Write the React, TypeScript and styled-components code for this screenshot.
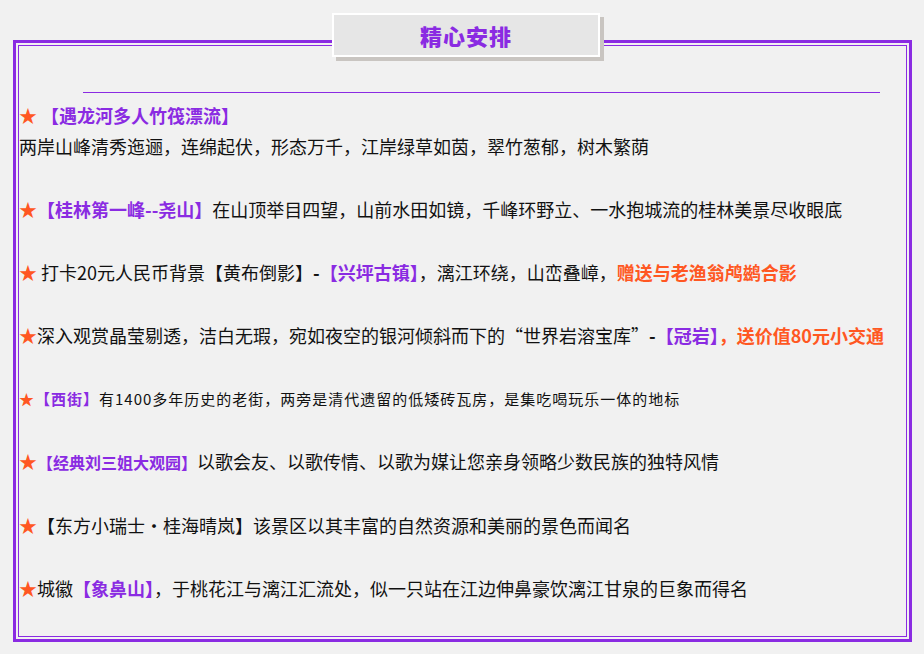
import React from 'react';
import styled, { createGlobalStyle } from 'styled-components';

const Global = createGlobalStyle`
  body {
    margin: 0;
    background: #f1f1f1;
    font-family: "Noto Sans CJK SC", "Liberation Sans", sans-serif;
  }
`;

const Page = styled.div`
  width: 924px;
  height: 654px;
  padding: 13px 12px 0 13px;
  box-sizing: border-box;
  overflow: hidden;
`;

const Frame = styled.div`
  margin-top: 27px;
  border: 3px solid #8a2be2;
  padding: 2px;
  position: relative;
`;

const Inner = styled.div`
  border: 1px solid #8a2be2;
  padding: 46px 0 10px 0;
  height: 592px;
  box-sizing: border-box;
`;

const TitleBox = styled.div`
  position: absolute;
  left: 316px;
  top: -30px;
  width: 264px;
  height: 40px;
  background: #e6e6e6;
  border: 2px solid #fff;
  box-shadow: 4px 4px 0 #c9c5c1;
  display: flex;
  align-items: center;
  justify-content: center;
  color: #8a2be2;
  font-size: 22px;
  font-weight: 900;
  letter-spacing: 1px;
`;

const Rule = styled.div`
  height: 1px;
  background: #8a2be2;
  margin: 0 26px 0 64px;
`;

const List = styled.div`
  display: flex;
  flex-direction: column;
  gap: 32px;
  margin-top: 7px;
`;

const Item = styled.div<{ $small?: boolean }>`
  font-size: ${({ $small }) => ($small ? '15px' : '18px')};
  line-height: 31px;
  color: #111;
  letter-spacing: ${({ $small }) => ($small ? '1px' : '0')};
`;

const Star = styled.span`
  color: #ff5722;
`;

const Hi = styled.span<{ $size?: number }>`
  color: #8a2be2;
  font-weight: bold;
  font-size: ${({ $size }) => ($size ? `${$size}px` : 'inherit')};
`;

const Red = styled.span`
  color: #ff5722;
  font-weight: bold;
`;

export default function App() {
  return (
    <Page>
      <Global />
      <Frame>
        <TitleBox>精心安排</TitleBox>
        <Inner>
          <Rule />
          <List>
            <Item>
              <Star>★</Star> <Hi>【遇龙河多人竹筏漂流】</Hi>
              <br />
              两岸山峰清秀迤逦，连绵起伏，形态万千，江岸绿草如茵，翠竹葱郁，树木繁荫
            </Item>
            <Item>
              <Star>★</Star><Hi>【桂林第一峰--尧山】</Hi>在山顶举目四望，山前水田如镜，千峰环野立、一水抱城流的桂林美景尽收眼底
            </Item>
            <Item>
              <Star>★</Star> 打卡20元人民币背景【黄布倒影】<b>-</b><Hi>【兴坪古镇】</Hi>，漓江环绕，山峦叠嶂，<Red>赠送与老渔翁鸬鹚合影</Red>
            </Item>
            <Item>
              <Star>★</Star>深入观赏晶莹剔透，洁白无瑕，宛如夜空的银河倾斜而下的“世界岩溶宝库”<b>-</b><Hi>【冠岩】</Hi><Red>，送价值80元小交通</Red>
            </Item>
            <Item $small>
              <Star>★</Star><Hi>【西街】</Hi>有1400多年历史的老街，两旁是清代遗留的低矮砖瓦房，是集吃喝玩乐一体的地标
            </Item>
            <Item>
              <Star>★</Star><Hi $size={16}>【经典刘三姐大观园】</Hi>以歌会友、以歌传情、以歌为媒让您亲身领略少数民族的独特风情
            </Item>
            <Item>
              <Star>★</Star>【东方小瑞士·桂海晴岚】该景区以其丰富的自然资源和美丽的景色而闻名
            </Item>
            <Item>
              <Star>★</Star>城徽<Hi>【象鼻山】</Hi>，于桃花江与漓江汇流处，似一只站在江边伸鼻豪饮漓江甘泉的巨象而得名
            </Item>
          </List>
        </Inner>
      </Frame>
    </Page>
  );
}
